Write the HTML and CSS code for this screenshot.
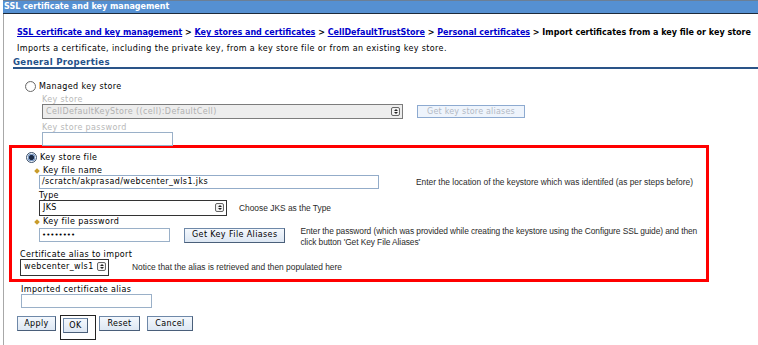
FILE: index.html
```html
<!DOCTYPE html>
<html lang="en">
<head>
  <meta charset="UTF-8">
  <meta name="viewport" content="width=device-width, initial-scale=1.0">
  <title>Import certificates from a key file or key store</title>
  <link rel="stylesheet" href="styles.css">
</head>
<body>
  <div class="titlebar">SSL certificate and key management</div>
  <div class="page">
    <p class="crumbs"><a href="#">SSL certificate and key management</a> &gt; <a href="#">Key stores and certificates</a> &gt; <a href="#">CellDefaultTrustStore</a> &gt; <a href="#">Personal certificates</a> &gt; <b>Import certificates from a key file or key store</b></p>
    <p class="desc">Imports a certificate, including the private key, from a key store file or from an existing key store.</p>
    <h3 class="section">General Properties</h3>

    <!-- managed key store (disabled) -->
    <div class="managed">
      <label class="radio"><span class="circle"></span>Managed key store</label>
      <div class="field off ks-field">
        <span class="lbl">Key store</span>
        <div class="row">
          <div class="select ks">CellDefaultKeyStore ((cell):DefaultCell)<span class="spin"></span></div>
          <span class="btn ghost">Get key store aliases</span>
        </div>
      </div>
      <div class="field off ksp-field">
        <span class="lbl">Key store password</span>
        <div class="text pw"></div>
      </div>
    </div>

    <!-- key store file -->
    <div class="highlight">
      <label class="radio on"><span class="circle"></span>Key store file</label>
      <div class="field name-field">
        <span class="lbl req">Key file name</span>
        <div class="row">
          <div class="text file">/scratch/akprasad/webcenter_wls1.jks</div>
          <span class="hint hint-file">Enter the location of the keystore which was identifed (as per steps before)</span>
        </div>
      </div>
      <div class="field type-field">
        <span class="lbl">Type</span>
        <div class="row">
          <div class="select type">JKS<span class="spin"></span></div>
          <span class="hint hint-type">Choose JKS as the Type</span>
        </div>
      </div>
      <div class="field pw-field">
        <span class="lbl req">Key file password</span>
        <div class="row top">
          <div class="text pw dots">&#8226;&#8226;&#8226;&#8226;&#8226;&#8226;&#8226;&#8226;</div>
          <span class="btn aliases">Get Key File Aliases</span>
          <span class="hint hint-pw">Enter the password (which was provided while creating the keystore using the Configure SSL guide) and then<br>click button 'Get Key File Aliases'</span>
        </div>
      </div>
      <div class="field alias">
        <span class="lbl">Certificate alias to import</span>
        <div class="row">
          <div class="select cert">webcenter_wls1<span class="spin"></span></div>
          <span class="hint hint-alias">Notice that the alias is retrieved and then populated here</span>
        </div>
      </div>
    </div>

    <div class="field imported">
      <span class="lbl">Imported certificate alias</span>
      <div class="text pw"></div>
    </div>

    <div class="actions">
      <span class="btn apply">Apply</span>
      <span class="focus"><span class="btn ok">OK</span></span>
      <span class="btn reset">Reset</span>
      <span class="btn cancel">Cancel</span>
    </div>
  </div>
</body>
</html>
```

FILE: styles.css
```css
*{margin:0;padding:0;box-sizing:border-box;}

body {
  font-family: "DejaVu Sans", Verdana, sans-serif;
  font-size: 8px;
  letter-spacing: 0.38px;
  color: #000;
  background: #fff;
  width: 758px;
  height: 345px;
  overflow: hidden;
}

.titlebar {
  margin-left: 3px;
  height: 14px;
  background: #5590d2;
  border-top: 1px solid #6b7f96;
  border-bottom: 1px solid #1d2a3a;
  color: #fff;
  font-weight: bold;
  letter-spacing: 0;
  line-height: 12px;
  padding-left: 1px;
}

.page {
  margin-left: 3px;
  border-left: 1px solid #a8a8a8;
  height: 331px;
  padding-top: 14px;
}

.crumbs {
  padding-left: 13px;
  font-weight: bold;
  letter-spacing: 0;
  line-height: 10px;
}
.crumbs a {
  color: #0000cc;
}

.desc {
  padding-left: 13px;
  margin-top: 6px;
  line-height: 10px;
}

.section {
  margin: 3px 0 0 9px;
  font-size: 8.6px;
  letter-spacing: 0.3px;
  color: #24518a;
  line-height: 10px;
  border-bottom: 2px solid #2a5488;
}

/* radios */
.radio {
  display: flex;
  align-items: center;
  height: 12px;
}
.circle {
  width: 11px;
  height: 11px;
  border-radius: 50%;
  border: 1px solid #6a6a6a;
  background: radial-gradient(circle at 60% 60%, #fff 55%, #d8d8d8);
  margin-right: 3px;
}
.radio.on .circle {
  border-color: #3a4f6a;
  background: radial-gradient(circle, #1b2c46 0 2.2px, #7d9bc4 2.6px 3.6px, #e9eff6 4px);
}

.managed {
  padding: 11px 0 0 21px;
}
.managed .field {
  padding-left: 17px;
}

.field .lbl {
  display: block;
  line-height: 9px;
}
.field.off .lbl {
  color: #b8b8b8;
}

.row {
  display: flex;
  align-items: center;
}
.row.top {
  align-items: flex-start;
}

/* inputs */
.text,
.select {
  height: 14px;
  border: 1px solid #8a9fb8;
  background: #fff;
  line-height: 12px;
  padding-left: 2px;
  position: relative;
}
.select {
  border-color: #333;
  padding-left: 3px;
  line-height: 13px;
}
.spin {
  position: absolute;
  right: 2px;
  top: 2px;
  width: 9px;
  height: 9px;
  border: 1px solid #666;
  border-radius: 2px;
  background: #f2f2f2;
}
.spin::before,
.spin::after {
  content: "";
  position: absolute;
  left: 2px;
  border-left: 2px solid transparent;
  border-right: 2px solid transparent;
}
.spin::before {
  top: 1px;
  border-bottom: 2px solid #222;
}
.spin::after {
  bottom: 1px;
  border-top: 2px solid #222;
}

.ks-field {
  margin-top: 3px;
}
.select.ks {
  width: 361px;
  height: 15px;
  background: #ededed;
  border-color: #7c7c7c;
  color: #b0b0b0;
}
.ksp-field {
  margin-top: 4px;
}
.text.pw {
  width: 131px;
  height: 14px;
  border-color: #9ab0c8;
}

/* buttons */
.btn {
  display: inline-block;
  height: 14px;
  line-height: 12px;
  padding: 0 6px;
  border: 1px solid #6e88a8;
  border-right-color: #4a5f7a;
  border-bottom-color: #4a5f7a;
  background: linear-gradient(#f4f8fd, #dde7f3);
  color: #000;
  white-space: nowrap;
}
.btn.ghost {
  margin-left: 14px;
  width: 108px;
  height: 13px;
  text-align: center;
  letter-spacing: 0.2px;
  color: #b3b9c4;
  border-color: #8daad0;
  background: #eef4fc;
}

/* highlighted block */
.highlight {
  margin: -1px 49px 0 5px;
  border: 3px solid #f00;
  padding: 3px 0 0 14px;
  height: 137px;
}
.highlight .field {
  padding-left: 13px;
}
.lbl.req {
  position: relative;
  padding-left: 4px;
}
.lbl.req::before {
  content: "";
  position: absolute;
  left: -4px;
  top: 3px;
  width: 4px;
  height: 4px;
  background: #c99c2a;
  transform: rotate(45deg);
}

.name-field {
  margin-top: 3px;
}
.text.file {
  width: 340px;
  height: 14px;
  border-color: #93acc9;
}
.hint {
  font-family: "Liberation Sans", Arial, sans-serif;
  font-size: 8.4px;
  letter-spacing: 0;
  color: #2a2a2a;
  line-height: 11px;
}
.hint-file {
  margin-left: 37px;
}
.type-field {
  margin-top: 2px;
}
.select.type {
  width: 188px;
  height: 16px;
}
.hint-type {
  margin-left: 12px;
}
.pw-field {
  margin-top: 1px;
}
.text.dots {
  margin-top: 2px;
  font-size: 7px;
  letter-spacing: 0;
}
.btn.aliases {
  margin-left: 14px;
  margin-top: 2px;
  padding: 0 7px;
  height: 15px;
}
.hint-pw {
  margin-left: 15px;
  letter-spacing: -0.08px;
}

.highlight .field.alias {
  margin-left: -6px;
  padding-left: 0;
  margin-top: 2px;
}
.select.cert {
  width: 89px;
  height: 17px;
}
.hint-alias {
  margin-left: 23px;
}

.field.imported {
  margin: 3px 0 0 17px;
}

.actions {
  display: flex;
  align-items: flex-start;
  margin: 8px 0 0 13px;
}
.actions .btn {
  height: 15px;
  line-height: 13px;
  padding: 0;
  text-align: center;
}
.btn.apply {
  width: 39px;
}
.btn.ok {
  width: 25px;
}
.btn.reset {
  width: 41px;
  margin-right: 7px;
}
.btn.cancel {
  width: 46px;
}
.focus {
  display: flex;
  height: 25px;
  width: 36px;
  border: 1px solid #222;
  padding: 2px 0 0 2px;
  margin: -1px 3px 0 4px;
}
```
